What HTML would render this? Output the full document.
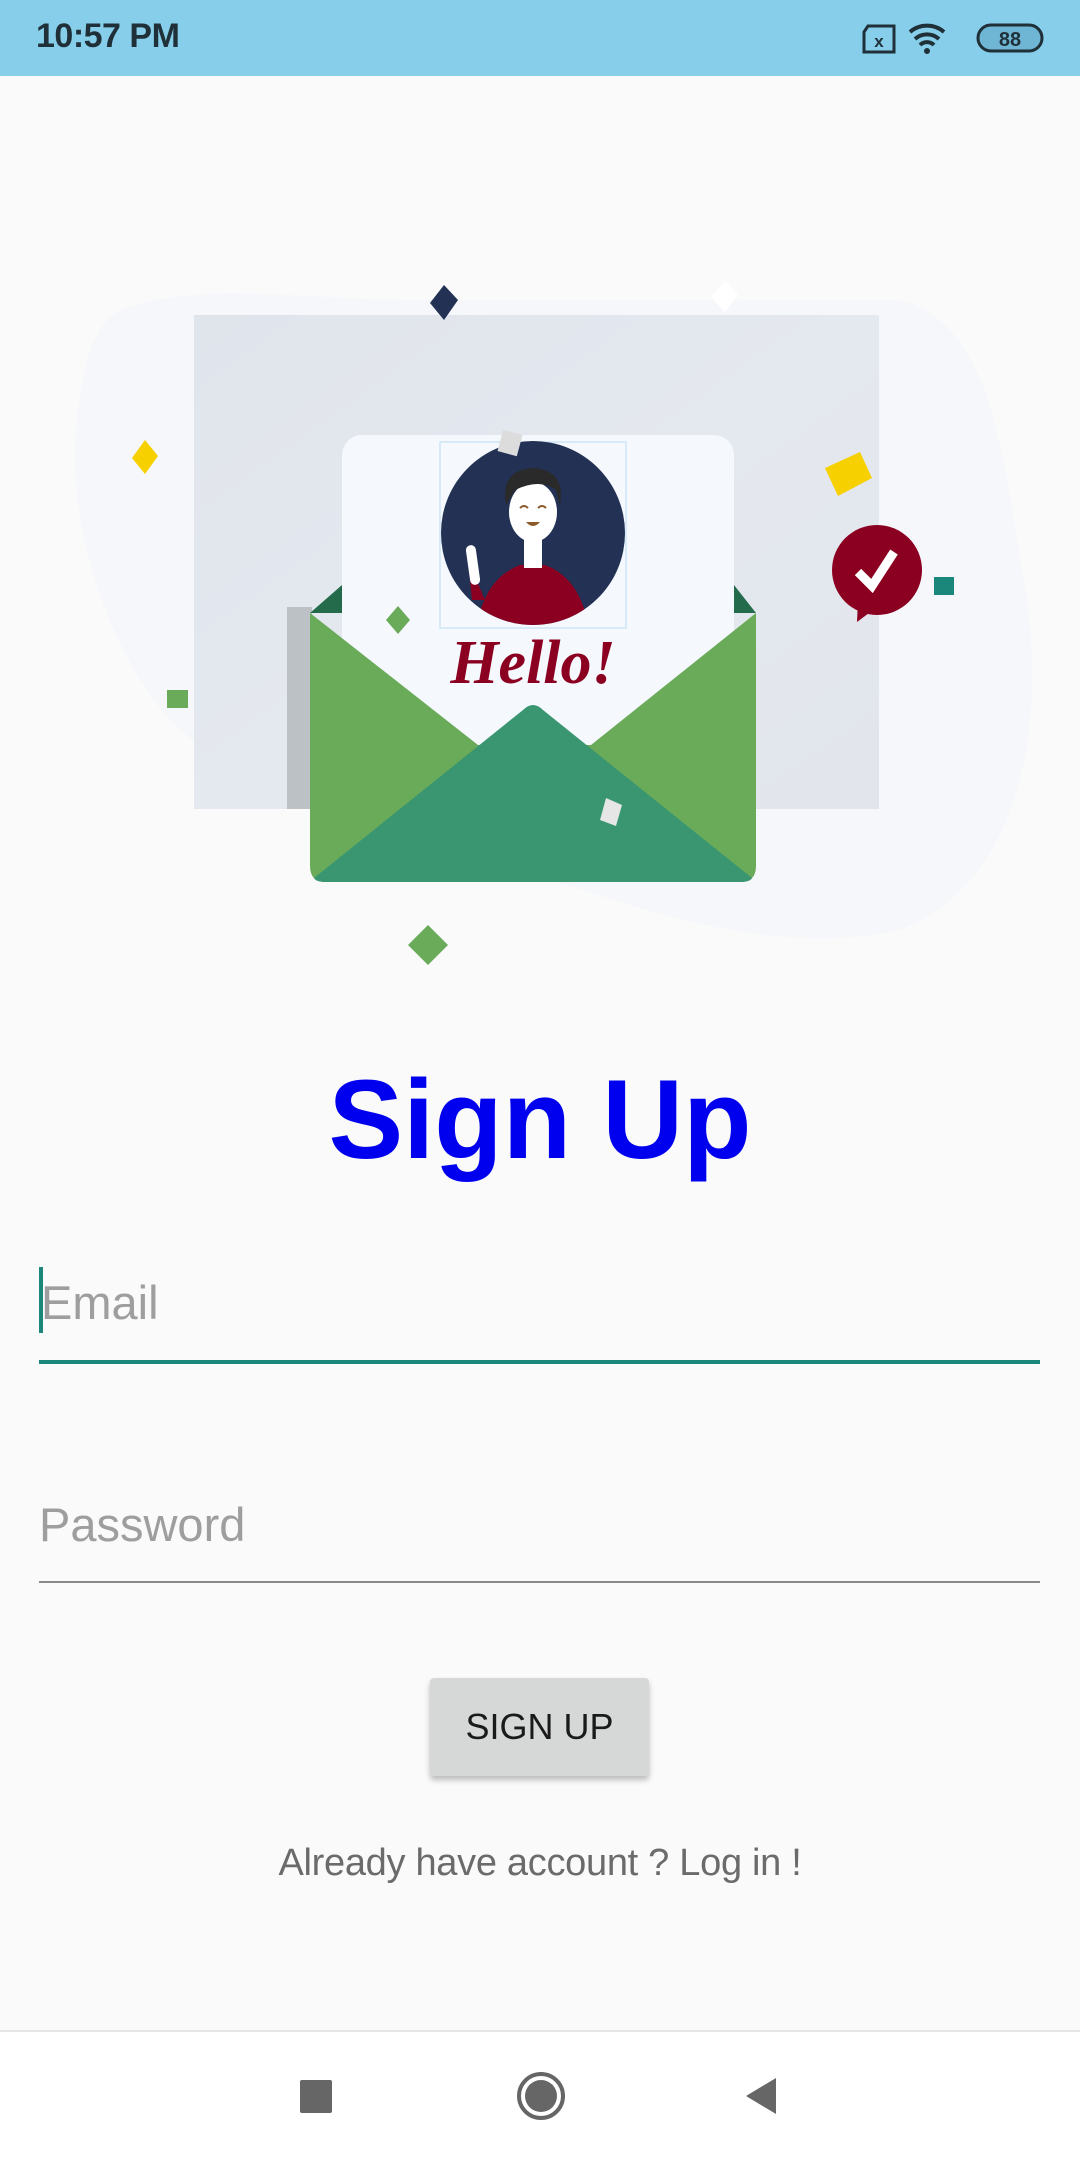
<!DOCTYPE html>
<html><head><meta charset="utf-8">
<style>
html,body{margin:0;padding:0}
body{width:1080px;height:2160px;position:relative;background:#fafafa;font-family:"Liberation Sans",sans-serif;overflow:hidden}
.abs{position:absolute}
</style></head><body>
<div class="abs" style="left:0;top:0;width:1080px;height:76px;background:#87ceeb"></div>
<div class="abs" style="left:36px;top:17px;font-size:34px;font-weight:bold;color:#1f3038;letter-spacing:-0.5px">10:57 PM</div>
<svg class="abs" style="left:860px;top:18px" width="190" height="40" viewBox="0 0 190 40">
  <path d="M8 8 h26 v26 h-30 v-20 z" fill="none" stroke="#1f3038" stroke-width="3"/>
  <text x="19" y="29" font-size="17" font-family="Liberation Sans" font-weight="bold" fill="#1f3038" text-anchor="middle">x</text>
  <path d="M50 14 a26 26 0 0 1 34 0" fill="none" stroke="#1f3038" stroke-width="4"/>
  <path d="M55 21 a18 18 0 0 1 24 0" fill="none" stroke="#1f3038" stroke-width="4"/>
  <path d="M60 27 a10 10 0 0 1 14 0" fill="none" stroke="#1f3038" stroke-width="4"/>
  <circle cx="67" cy="33" r="3" fill="#1f3038"/>
  <rect x="118" y="7" width="64" height="26" rx="13" fill="#6fb5d4" stroke="#1f3038" stroke-width="3"/>
  <text x="150" y="28" font-size="20" font-family="Liberation Sans" font-weight="bold" fill="#1f3038" text-anchor="middle">88</text>
</svg>

<svg class="abs" style="left:0;top:0" width="1080" height="1000" viewBox="0 0 1080 1000">
  <defs><linearGradient id="g" x1="0" y1="0" x2="1" y2="1"><stop offset="0" stop-color="#e0e4eb"/><stop offset="0.5" stop-color="#e4e8ef"/><stop offset="1" stop-color="#e2e6ec"/></linearGradient></defs>
  <path d="M120 310 C200 280 300 300 420 300 L900 300 C980 320 1000 420 1020 560 C1050 700 1030 880 900 930 C760 960 620 900 520 870 C380 820 250 800 170 720 C100 640 60 500 80 400 C85 350 100 320 120 310Z" fill="#f5f7fa"/>
  <rect x="194" y="315" width="685" height="494" fill="url(#g)"/>
  <rect x="287" y="607" width="25" height="202" fill="#bcc1c6"/>
  <path d="M310 613 L342 585 L734 585 L756 613 Z" fill="#236b4a"/>
  <rect x="342" y="435" width="392" height="320" rx="20" fill="#f5f8fd"/>
  <path d="M310 613 L478 745 L591 745 L756 613 L756 866 Q756 882 740 882 L326 882 Q310 882 310 866 Z" fill="#6aab5a"/>
  <path d="M314 878 L523 710 Q533 700 543 710 L752 878 Q750 882 740 882 L326 882 Q316 882 314 878Z" fill="#3a9670"/>
  <rect x="440" y="442" width="186" height="186" fill="none" stroke="#cfe6f5" stroke-width="1.5"/>
  <circle cx="533" cy="533" r="92" fill="#223154"/>
  <clipPath id="c"><circle cx="533" cy="533" r="92"/></clipPath>
  <g clip-path="url(#c)">
    <path d="M475 640 Q480 580 520 565 L545 565 Q585 580 590 640 Z" fill="#8b0020"/>
    <path d="M468 560 L472 600 L485 600 Z" fill="#8b0020"/>
    <rect x="468" y="545" width="10" height="40" rx="5" fill="#fff" transform="rotate(-8 473 565)"/>
    <rect x="524" y="540" width="18" height="28" fill="#fff"/>
    <ellipse cx="533" cy="512" rx="24" ry="30" fill="#fff"/>
    <path d="M506 505 Q500 470 533 468 Q566 470 560 505 L556 490 Q540 478 515 490 Z" fill="#2a2a2a"/>
    <path d="M520 508 q4 -4 8 0 M538 508 q4 -4 8 0" stroke="#8a5a2a" stroke-width="2" fill="none"/>
    <path d="M526 522 q7 8 14 0 z" fill="#8a5a2a"/>
  </g>
  <rect x="500" y="432" width="20" height="22" fill="#dcdcdc" transform="rotate(15 510 443)"/>
  <text x="533" y="683" font-family="Liberation Serif" font-style="italic" font-weight="bold" font-size="62" fill="#8b0020" text-anchor="middle">Hello!</text>
  <path d="M444 285 L458 300 L444 320 L430 303Z" fill="#223154"/>
  <path d="M725 280 L738 295 L725 312 L711 297Z" fill="#fff"/>
  <path d="M145 440 L158 456 L145 474 L132 458Z" fill="#f7d000"/>
  <path d="M825 468 L860 452 L872 478 L838 496Z" fill="#f7d000"/>
  <rect x="934" y="577" width="20" height="18" fill="#1a877a"/>
  <rect x="167" y="690" width="21" height="18" fill="#6aab5a"/>
  <path d="M398 606 L410 620 L398 634 L386 620Z" fill="#6aab5a"/>
  <path d="M428 925 L448 945 L428 965 L408 945Z" fill="#6aab5a"/>
  <path d="M606 798 L622 805 L616 826 L600 820Z" fill="#e6e6e6"/>
  <path d="M858 600 L857 622 L873 610Z" fill="#8b0020"/>
  <circle cx="877" cy="570" r="45" fill="#8b0020"/>
  <path d="M858 572 L872 586 L894 552" stroke="#fff" stroke-width="9" fill="none"/>
</svg>

<div class="abs" style="left:0;width:1080px;top:1052px;text-align:center;font-size:112px;font-weight:bold;color:#0000ee;line-height:136px">Sign Up</div>

<div class="abs" style="left:39px;top:1267px;width:4px;height:66px;background:#1a877a"></div>
<div class="abs" style="left:41px;top:1275px;font-size:47px;color:#9e9e9e">Email</div>
<div class="abs" style="left:39px;top:1360px;width:1001px;height:4px;background:#1a877a"></div>
<div class="abs" style="left:39px;top:1497px;font-size:47px;color:#9e9e9e">Password</div>
<div class="abs" style="left:39px;top:1581px;width:1001px;height:2px;background:#8a8a8a"></div>

<div class="abs" style="left:430px;top:1678px;width:219px;height:98px;background:#d6d7d7;border-radius:4px;box-shadow:0 4px 6px rgba(0,0,0,0.25);text-align:center;line-height:98px;font-size:36px;color:#1a1a1a">SIGN UP</div>

<div class="abs" style="left:0;width:1080px;top:1842px;text-align:center;font-size:38px;color:#6b6b6b;letter-spacing:-0.3px">Already have account ? Log in !</div>

<div class="abs" style="left:0;top:2030px;width:1080px;height:130px;background:#fff;border-top:2px solid #e6e6e6"></div>
<div class="abs" style="left:300px;top:2080px;width:32px;height:33px;background:#666;border-radius:2px"></div>
<div class="abs" style="left:517px;top:2072px;width:40px;height:40px;border:4px solid #666;border-radius:50%;box-sizing:content-box"></div>
<div class="abs" style="left:525px;top:2080px;width:32px;height:32px;background:#666;border-radius:50%"></div>
<svg class="abs" style="left:742px;top:2076px" width="36" height="40"><path d="M34 2 L34 38 L4 20 Z" fill="#666"/></svg>
</body></html>
